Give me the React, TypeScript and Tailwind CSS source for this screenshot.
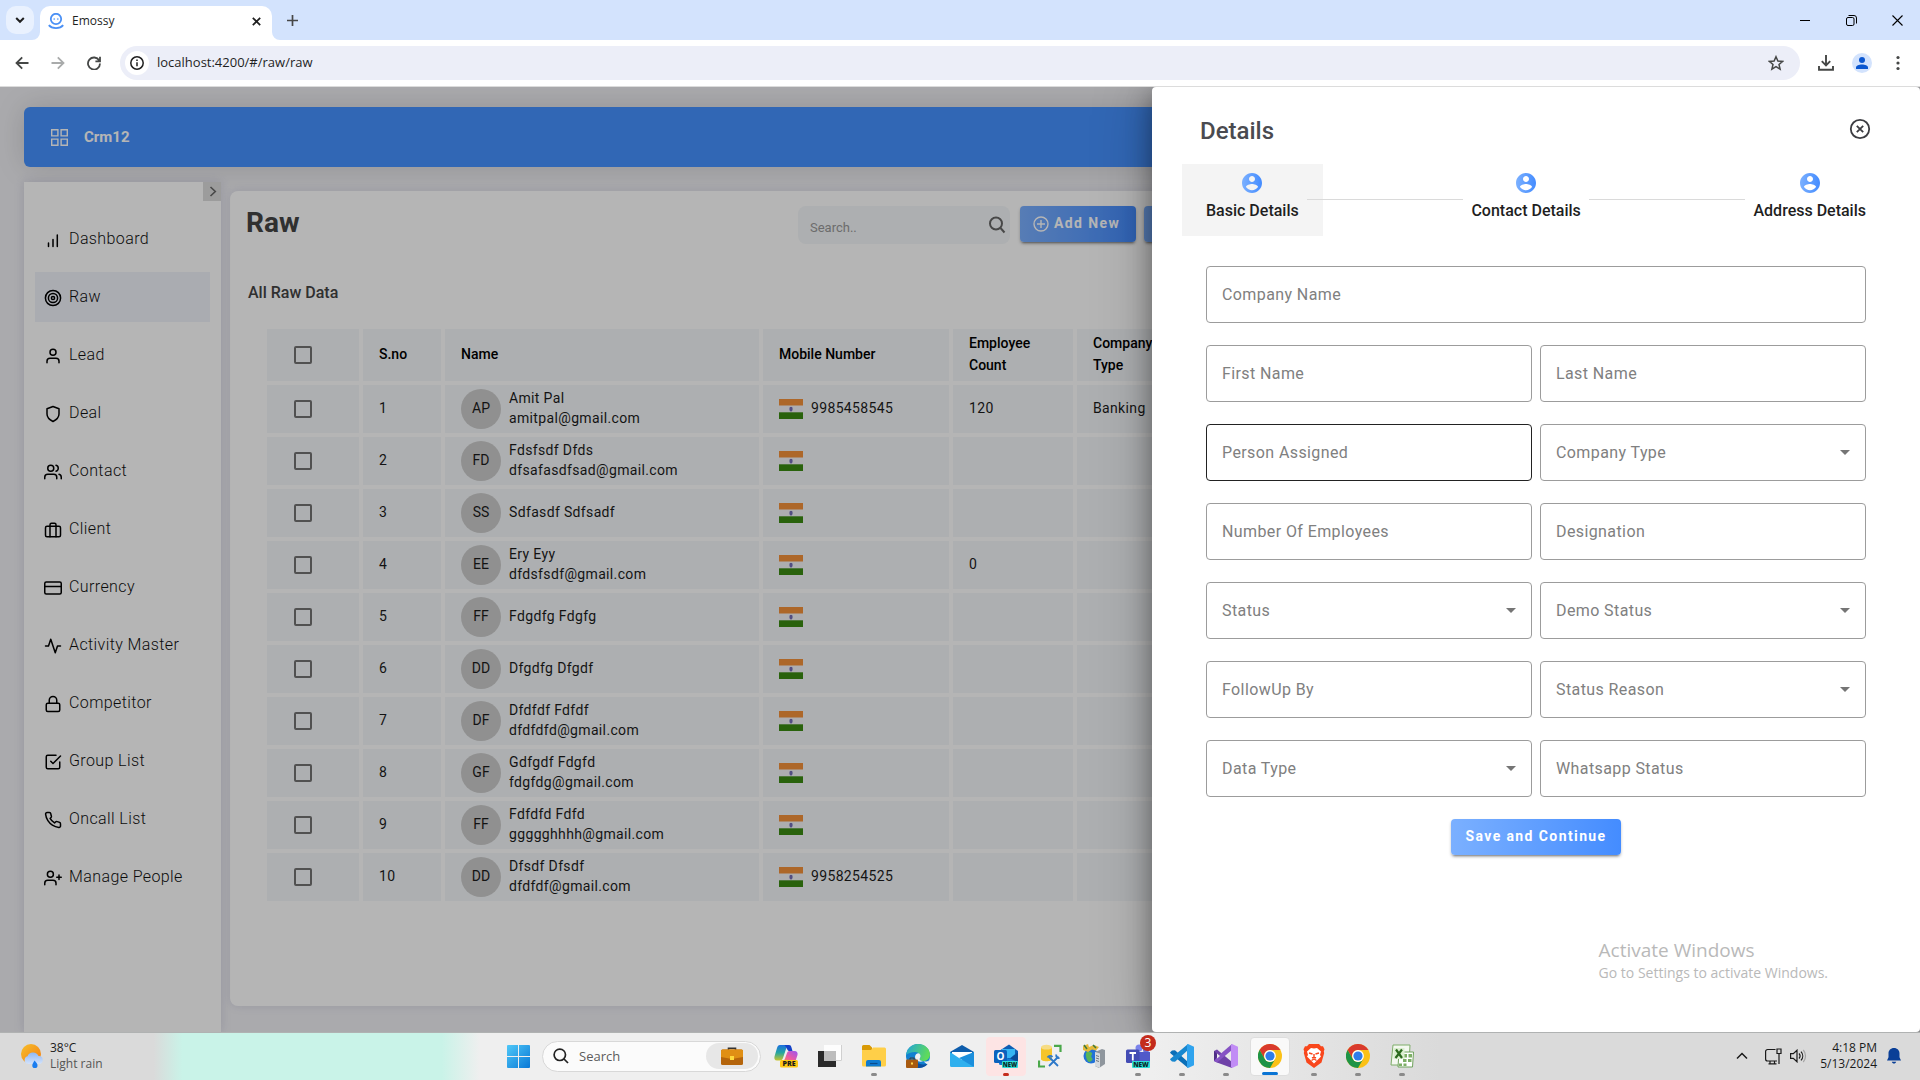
import React from "react";
import {
  FiActivity,
  FiBriefcase,
  FiCheckSquare,
  FiCreditCard,
  FiLock,
  FiPhone,
  FiShield,
  FiUser,
  FiUserPlus,
  FiUsers,
} from "react-icons/fi";

const iconButton = "flex items-center justify-center";

/* ---------- Browser chrome ---------- */

function TabStrip() {
  return (
    <div className="flex h-10 items-end bg-[#d3e3fd]">
      <button aria-label="Search tabs" className={`${iconButton} mb-1.5 ml-1.5 size-7 rounded-[10px] bg-[#e9f1fe]`}>
        <svg width="10" height="10" viewBox="0 0 10 10" fill="none" stroke="#1f1f1f" strokeWidth="2">
          <path d="M1.2 3 5 6.8 8.800 3" />
        </svg>
      </button>
      <div className="relative ml-1.5 flex h-[34px] w-[232px] items-center rounded-t-[10px] bg-white pr-2 pl-2 pb-1">
        <svg className="absolute bottom-0 -left-2" width="8" height="8" viewBox="0 0 8 8" fill="#fff">
          <path d="M8 0v8H0a8 8 0 0 0 8-8z" />
        </svg>
        <svg className="absolute -right-2 bottom-0" width="8" height="8" viewBox="0 0 8 8" fill="#fff">
          <path d="M0 0v8h8a8 8 0 0 1-8-8z" />
        </svg>
        <svg width="16" height="16" viewBox="0 0 16 16" fill="none" stroke="#4a90f5">
          <circle cx="8" cy="6" r="5.200" strokeWidth="1.800" />
          <circle cx="6.200" cy="6" r=".6" fill="#4a90f5" strokeWidth=".4" />
          <circle cx="9.800" cy="6" r=".6" fill="#4a90f5" strokeWidth=".4" />
          <path d="M.8 12.200C4 16 12 16 15.200 12.200" strokeWidth="1.800" />
        </svg>
        <span className="ml-2 flex-1 text-xs text-[#1f1f1f]">Emossy</span>
        <button aria-label="Close tab" className={`${iconButton} size-4`}>
          <svg width="9" height="9" viewBox="0 0 9 9" stroke="#1f1f1f" strokeWidth="1.700">
            <path d="M.8.8l7.400 7.400M8.200.8.800 8.200" />
          </svg>
        </button>
      </div>
      <button aria-label="New tab" className={`${iconButton} mb-2 ml-2 size-6`}>
        <svg width="11" height="11" viewBox="0 0 11 11" stroke="#474747" strokeWidth="1.700">
          <path d="M5.500 0v11M0 5.500h11" />
        </svg>
      </button>
      <div className="ml-auto flex h-10 items-center">
        <button aria-label="Minimize" className={`${iconButton} h-10 w-[46px]`}>
          <svg width="10" height="10" viewBox="0 0 10 10" stroke="#000">
            <path d="M0 5.500h10" />
          </svg>
        </button>
        <button aria-label="Restore" className={`${iconButton} h-10 w-[46px]`}>
          <svg width="11" height="11" viewBox="0 0 11 11" fill="none" stroke="#000">
            <rect x=".5" y="2.500" width="7.500" height="8" rx="1.500" />
            <path d="M2.500.5h5.500a2.500 2.500 0 0 1 2.500 2.500v5.500" />
          </svg>
        </button>
        <button aria-label="Close window" className={`${iconButton} h-10 w-[46px]`}>
          <svg width="11" height="11" viewBox="0 0 11 11" stroke="#000" strokeWidth="1.100">
            <path d="M.5.5l10 10M10.500.5l-10 10" />
          </svg>
        </button>
      </div>
    </div>
  );
}

function AddressBar() {
  return (
    <div className="flex h-[47px] items-center border-b border-[#dcdcdc] bg-white pr-2.5 pl-2.5">
      <button aria-label="Back" className={`${iconButton} size-6`}>
        <svg width="14" height="14" viewBox="0 0 14 14" fill="none" stroke="#454746" strokeWidth="1.800">
          <path d="M13.500 7H1.800M7.200 1.300 1.500 7l5.700 5.700" />
        </svg>
      </button>
      <button aria-label="Forward" className={`${iconButton} ml-3 size-6`}>
        <svg width="14" height="14" viewBox="0 0 14 14" fill="none" stroke="#a9abab" strokeWidth="1.800">
          <path d="M.5 7h11.700M6.800 1.300 12.500 7l-5.700 5.700" />
        </svg>
      </button>
      <button aria-label="Reload" className={`${iconButton} ml-3 size-6`}>
        <svg width="14" height="14" viewBox="0 0 14 14" fill="none" stroke="#454746" strokeWidth="1.800">
          <path d="M12.200 4.500A6 6 0 1 0 13 7.500M13 .8v4.500H8.400" />
        </svg>
      </button>
      <div className="ml-3.5 flex h-[34px] flex-1 items-center rounded-full bg-[#eceef8] px-[5px]">
        <button aria-label="Site information" className={`${iconButton} size-6 rounded-full bg-white`}>
          <svg width="14" height="14" viewBox="0 0 14 14" fill="none" stroke="#1f1f1f" strokeWidth="1.500">
            <circle cx="7" cy="7" r="6.200" />
            <path d="M7 6.200v4M7 3.500v1.500" />
          </svg>
        </button>
        <input
          aria-label="Address"
          readOnly
          value="localhost:4200/#/raw/raw"
          className="ml-2 flex-1 bg-transparent text-[13px] text-[#1f1f1f] outline-none"
        />
        <button aria-label="Bookmark" className={`${iconButton} mr-[5px] size-7`}>
          <svg width="16" height="16" viewBox="0 0 16 16" fill="none" stroke="#454746" strokeWidth="1.500">
            <path d="m8 1.700 1.900 4.300 4.700.4-3.600 3.100 1.100 4.600L8 11.700l-4.100 2.400L5 9.500 1.400 6.400l4.700-.4z" />
          </svg>
        </button>
      </div>
      <button aria-label="Downloads" className={`${iconButton} ml-3 size-7`}>
        <svg width="16" height="16" viewBox="0 0 16 16" fill="none" stroke="#454746" strokeWidth="1.900">
          <path d="M8 0v10M3.800 6.200 8 10.400l4.200-4.200M1 11v3.800h14V11" />
        </svg>
      </button>
      <button aria-label="Profile" className={`${iconButton} ml-3 size-5 rounded-full bg-[#d3e3fd]`}>
        <svg width="12" height="12" viewBox="0 0 12 12" fill="#0b57d0">
          <circle cx="6" cy="3" r="3" />
          <path d="M0 12v-1.500C0 8.500 3 7.500 6 7.500s6 1 6 3V12z" />
        </svg>
      </button>
      <button aria-label="Menu" className={`${iconButton} ml-3.5 size-6`}>
        <svg width="4" height="16" viewBox="0 0 4 16" fill="#454746">
          <circle cx="2" cy="2.500" r="1.600" />
          <circle cx="2" cy="8" r="1.600" />
          <circle cx="2" cy="13.500" r="1.600" />
        </svg>
      </button>
    </div>
  );
}

/* ---------- Sidebar ---------- */

const BarsIcon = () => (
  <svg width="18" height="18" viewBox="0 0 18 18" stroke="#000" strokeWidth="1.500" strokeLinecap="round">
    <path d="M4.500 12v3.500M9 8.500v7M13.300 4v11.500" />
  </svg>
);

const TargetIcon = () => (
  <svg width="18" height="18" viewBox="0 0 18 18" fill="none" stroke="#000" strokeWidth="1.500">
    <circle cx="9" cy="9" r="7.600" />
    <circle cx="9" cy="9" r="4.600" />
    <circle cx="9" cy="9" r="1.600" />
  </svg>
);

const menu = [
  { label: "Dashboard", Icon: BarsIcon },
  { label: "Raw", Icon: TargetIcon, active: true },
  { label: "Lead", Icon: FiUser },
  { label: "Deal", Icon: FiShield },
  { label: "Contact", Icon: FiUsers },
  { label: "Client", Icon: FiBriefcase },
  { label: "Currency", Icon: FiCreditCard },
  { label: "Activity Master", Icon: FiActivity },
  { label: "Competitor", Icon: FiLock },
  { label: "Group List", Icon: FiCheckSquare },
  { label: "Oncall List", Icon: FiPhone },
  { label: "Manage People", Icon: FiUserPlus },
];

function Sidebar() {
  return (
    <aside className="relative w-[197px] shrink-0 bg-white px-[11px] pt-8 shadow-[0_0_10px_rgba(80,80,140,0.18)]">
      <button aria-label="Expand menu" className={`${iconButton} absolute top-0 right-0 h-[19px] w-[18px] bg-[#dcdcdc] pl-0.5`}>
        <svg width="8" height="11" viewBox="0 0 8 11" fill="none" stroke="#666" strokeWidth="1.600">
          <path d="m1.500 1 4.800 4.500-4.800 4.500" />
        </svg>
      </button>
      <nav className="flex flex-col gap-2">
        {menu.map(({ label, Icon, active }) => (
          <a
            key={label}
            href="#"
            className={`flex h-[50px] items-center gap-[7px] pl-[9px] font-light tracking-wide text-[#111] ${active ? "bg-[#f0f2fa]" : ""}`}
          >
            <span className="pt-0.5 text-lg text-black">
              <Icon />
            </span>
            {label}
          </a>
        ))}
      </nav>
    </aside>
  );
}

/* ---------- Data table ---------- */

const rows = [
  { initials: "AP", name: "Amit Pal", email: "amitpal@gmail.com", mobile: "9985458545", count: "120", type: "Banking" },
  { initials: "FD", name: "Fdsfsdf Dfds", email: "dfsafasdfsad@gmail.com" },
  { initials: "SS", name: "Sdfasdf Sdfsadf" },
  { initials: "EE", name: "Ery Eyy", email: "dfdsfsdf@gmail.com", count: "0" },
  { initials: "FF", name: "Fdgdfg Fdgfg" },
  { initials: "DD", name: "Dfgdfg Dfgdf" },
  { initials: "DF", name: "Dfdfdf Fdfdf", email: "dfdfdfd@gmail.com" },
  { initials: "GF", name: "Gdfgdf Fdgfd", email: "fdgfdg@gmail.com" },
  { initials: "FF", name: "Fdfdfd Fdfd", email: "ggggghhhh@gmail.com" },
  { initials: "DD", name: "Dfsdf Dfsdf", email: "dfdfdf@gmail.com", mobile: "9958254525" },
];

const Flag = () => (
  <svg width="24" height="20" viewBox="0 0 24 20">
    <rect width="24" height="20" fill="#f4f4f8" />
    <rect width="24" height="6.500" fill="#f4913a" />
    <rect y="13.300" width="24" height="6.700" fill="#3a8a12" />
    <ellipse cx="12" cy="10" rx="1.800" ry="2.300" fill="#8f8cc8" />
    <path d="M12 8v4.500" stroke="#5a50a8" />
  </svg>
);

const Tick = ({ label }: { label: string }) => (
  <input
    type="checkbox"
    aria-label={label}
    className="ml-[27px] block size-[18px] appearance-none rounded-[2px] border-2 border-[#727272]"
  />
);

function DataTable() {
  const cell = "bg-[#f4f7f9] px-4";
  const textCell = "bg-[#f4f7f9] px-4 pb-0.5";
  return (
    <table className="w-full table-fixed border-separate border-spacing-1 text-left text-sm tracking-wide text-[#1c1c1c]">
      <colgroup>
        <col className="w-[92px]" />
        <col className="w-[78px]" />
        <col className="w-[314px]" />
        <col className="w-[186px]" />
        <col className="w-[120px]" />
        <col />
      </colgroup>
      <thead>
        <tr className="h-[52px] tracking-normal text-black [&>th]:bg-[#f4f7f9] [&>th]:font-medium">
          <th>
            <Tick label="Select all" />
          </th>
          <th className="px-4 pb-0.5">S.no</th>
          <th className="px-4 pb-0.5">Name</th>
          <th className="px-4 pb-0.5">Mobile Number</th>
          <th className="px-4 pb-0.5 leading-[22px]">Employee Count</th>
          <th className="px-4 pb-0.5 leading-[22px]">
            Company
            <br />
            Type
          </th>
        </tr>
      </thead>
      <tbody>
        {rows.map((r, i) => (
          <tr key={i} className="h-12">
            <td className="bg-[#f4f7f9]">
              <Tick label={`Select ${r.name}`} />
            </td>
            <td className={textCell}>{i + 1}</td>
            <td className={cell}>
              <div className="flex items-center gap-2">
                <span className="flex size-10 items-center justify-center rounded-full bg-[#cbcbcb] pb-0.5 tracking-normal">
                  {r.initials}
                </span>
                <span className="pb-0.5">
                  {r.name}
                  <br />
                  {r.email}
                </span>
              </div>
            </td>
            <td className={cell}>
              <div className="flex items-center gap-2">
                <Flag />
                <span className="pb-0.5">{r.mobile}</span>
              </div>
            </td>
            <td className={textCell}>{r.count}</td>
            <td className={textCell}>{r.type}</td>
          </tr>
        ))}
      </tbody>
    </table>
  );
}

const gradientButton =
  "h-9 rounded bg-linear-to-r from-[#7bb0ff] to-[#448cff] text-sm font-bold tracking-widest text-white shadow-[0_3px_2px_-2px_rgba(0,0,0,0.3),0_2px_3px_rgba(0,0,0,0.25)]";

function RawCard() {
  return (
    <section className="ml-[9px] mb-[26px] mt-[9px] min-w-0 flex-1 overflow-hidden rounded-lg bg-white px-4 pt-[15px] shadow-[0_0_10px_rgba(80,80,140,0.15)]">
      <div className="flex items-start">
        <h1 className="w-[552px] pt-px text-[28px] leading-8 font-bold text-[#444]">Raw</h1>
        <div className="flex h-[38px] w-[212px] items-center rounded-lg bg-[#f4f7f9] pr-1 pl-3">
          <input
            aria-label="Search"
            placeholder="Search.."
            className="min-w-0 flex-1 bg-transparent pt-1.5 text-[13px] outline-none placeholder:text-[#999]"
          />
          <svg width="18" height="18" viewBox="0 0 18 18" fill="none" stroke="#666" strokeWidth="2">
            <circle cx="8" cy="7.500" r="6" />
            <path d="m12.500 12 4 4.500" />
          </svg>
        </div>
        <button className={`${gradientButton} ml-2.5 flex w-[116px] items-center gap-[5px] pl-[13px]`}>
          <svg width="16" height="16" viewBox="0 0 16 16" fill="none" stroke="#fff" strokeWidth="1.400">
            <circle cx="8" cy="8" r="7" />
            <path d="M8 4v8M4 8h8" />
          </svg>
          <span className="pb-0.5">Add New</span>
        </button>
        <button aria-label="More actions" className={`${gradientButton} ml-2 w-[116px]`} />
      </div>
      <h2 className="mt-[37px] mb-5 ml-0.5 font-medium text-[#444]">All Raw Data</h2>
      <div className="ml-[17px]">
        <DataTable />
      </div>
    </section>
  );
}

/* ---------- Details drawer ---------- */

type FieldDef = { label: string; select?: boolean; wide?: boolean; active?: boolean };

const fields: FieldDef[] = [
  { label: "Company Name", wide: true },
  { label: "First Name" },
  { label: "Last Name" },
  { label: "Person Assigned", active: true },
  { label: "Company Type", select: true },
  { label: "Number Of Employees" },
  { label: "Designation" },
  { label: "Status", select: true },
  { label: "Demo Status", select: true },
  { label: "FollowUp By" },
  { label: "Status Reason", select: true },
  { label: "Data Type", select: true },
  { label: "Whatsapp Status" },
];

function Field({ label, select, wide, active }: FieldDef) {
  const id = label.toLowerCase().replace(/ /g, "-");
  const box = `h-[57px] w-full appearance-none rounded border bg-transparent px-4 [grid-area:1/1] ${active ? "border-[#222]" : "border-[#9c9c9c]"}`;
  return (
    <div className={`grid items-center ${wide ? "col-span-2" : ""}`}>
      {select ? (
        <select id={id} className={box} defaultValue="">
          <option value="" />
        </select>
      ) : (
        <input id={id} className={box} />
      )}
      <label htmlFor={id} className="pointer-events-none justify-self-start pl-4 tracking-wide text-[#808080] [grid-area:1/1]">
        {label}
      </label>
      {select && (
        <svg
          className="pointer-events-none mr-4 justify-self-end [grid-area:1/1]"
          width="10"
          height="5"
          viewBox="0 0 10 5"
          fill="#757575"
        >
          <path d="M0 0h10L5 5z" />
        </svg>
      )}
    </div>
  );
}

function Step({ label, active }: { label: string; active?: boolean }) {
  return (
    <button
      className={`flex h-[72px] flex-col items-center px-6 pt-[7px] ${active ? "bg-[#f4f4f4]" : ""}`}
    >
      <svg width="24" height="24" viewBox="0 0 24 24">
        <defs>
          <linearGradient id="step-gradient">
            <stop offset="0" stopColor="#7bb0ff" />
            <stop offset="1" stopColor="#448cff" />
          </linearGradient>
        </defs>
        <path
          fill="url(#step-gradient)"
          d="M12 2C6.480 2 2 6.480 2 12s4.480 10 10 10 10-4.480 10-10S17.520 2 12 2zm0 3c1.660 0 3 1.340 3 3s-1.340 3-3 3-3-1.340-3-3 1.340-3 3-3zm0 14.200c-2.500 0-4.710-1.280-6-3.220.03-1.990 4-3.080 6-3.080 1.990 0 5.970 1.090 6 3.080-1.290 1.940-3.500 3.220-6 3.220z"
        />
      </svg>
      <span className="mt-1 font-medium whitespace-nowrap text-[#1f1f1f]">{label}</span>
    </button>
  );
}

function Drawer() {
  return (
    <section
      aria-label="Details"
      className="absolute inset-y-0 right-0 flex w-2/5 flex-col rounded bg-white px-[30px] shadow-[0_8px_24px_rgba(0,0,0,0.35),0_0_60px_rgba(0,0,0,0.25)]"
    >
      <header className="flex items-center justify-between px-[18px] pt-7">
        <h2 className="text-2xl font-medium text-[#4a4b50]">Details</h2>
        <button aria-label="Close" className={`${iconButton} mb-1 size-6`}>
          <svg width="22" height="22" viewBox="0 0 22 22" fill="none" stroke="#3c3d42" strokeWidth="1.800">
            <circle cx="11" cy="11" r="9.200" />
            <path d="m7.800 7.800 6.400 6.400M14.200 7.800l-6.400 6.400" />
          </svg>
        </button>
      </header>
      <div className="mt-[17px] flex items-center">
        <Step label="Basic Details" active />
        <span className="-mx-4 mb-0.5 h-px flex-1 bg-[#dadada]" />
        <Step label="Contact Details" />
        <span className="-mx-4 mb-0.5 h-px flex-1 bg-[#dadada]" />
        <Step label="Address Details" />
      </div>
      <form className="mt-[30px] grid grid-cols-2 gap-x-2 gap-y-[22px] px-6">
        {fields.map((f) => (
          <Field key={f.label} {...f} />
        ))}
        <button type="button" className={`${gradientButton} col-span-2 w-[170px] justify-self-center pb-0.5`}>
          Save and Continue
        </button>
      </form>
      <div className="mt-auto mr-[62px] mb-12 self-end font-['Open_Sans',sans-serif] text-[#b9b9b9]">
        <p className="text-[19px] leading-6">Activate Windows</p>
        <p className="text-sm leading-[22px]">Go to Settings to activate Windows.</p>
      </div>
    </section>
  );
}

/* ---------- Taskbar ---------- */

const S = ({ children }: { children: React.ReactNode }) => (
  <svg width="24" height="24" viewBox="0 0 24 24">
    {children}
  </svg>
);

const CopilotIcon = () => (
  <S>
    <defs>
      <linearGradient id="cp-a" x1="0" y1="0" x2="0" y2="1">
        <stop offset="0" stopColor="#1b6fe0" />
        <stop offset=".5" stopColor="#25a6a0" />
        <stop offset="1" stopColor="#c9c52c" />
      </linearGradient>
      <linearGradient id="cp-b" x1="1" y1="0" x2="0" y2="1">
        <stop offset="0" stopColor="#9a55f2" />
        <stop offset=".6" stopColor="#ee5aa0" />
        <stop offset="1" stopColor="#fb8a4f" />
      </linearGradient>
    </defs>
    <path fill="url(#cp-a)" d="M6 1h9.500c-1.500 0-2.500 1-3 2.500L9 14c-.5 1.500-1.500 2.500-3 2.500H3c-2.500 0-3-2-2.500-4L3 4c.5-2 1.500-3 3-3z" />
    <path fill="#1442c8" d="M10 1h5c1.500 0 2 .8 2.500 2.500L18.500 7H15c-2 0-3-6-5-6z" />
    <path fill="url(#cp-b)" d="M16 7h4.500c2.500 0 3.500 2 3 4l-2 6H8c1.500 0 2.500-1 3-2.500l2-5.500c.5-1.500 1.500-2 3-2z" />
    <rect x="6" y="16" width="18" height="7.500" rx="1.500" fill="#ffc814" />
    <text x="15" y="22.200" fontSize="7" fontWeight="900" textAnchor="middle" fill="#1a1a1a" fontFamily="Open Sans">
      PRE
    </text>
  </S>
);

const TaskViewIcon = () => (
  <S>
    <rect x="0" y="7" width="18" height="16" fill="#2a2a2a" />
    <rect x="6" y="1" width="18" height="16" fill="#fff" opacity=".85" />
    <path d="M23.500 1v15.500H6" stroke="#d0d0d0" fill="none" />
    <rect x="6" y="7" width="12" height="10" fill="#bdbdbd" />
  </S>
);

const FolderIcon = () => (
  <S>
    <path d="M0 2.500A1.500 1.500 0 0 1 1.500 1h6L10 3.500V8H0z" fill="#d99a06" />
    <path d="M0 6h9l2-2.500h11.500A1.500 1.500 0 0 1 24 5v16a1.500 1.500 0 0 1-1.500 1.500h-21A1.500 1.500 0 0 1 0 21z" fill="#ffcf48" />
    <path d="M4 22.500V18a2 2 0 0 1 2-2h11a2 2 0 0 1 2 2v4.500z" fill="#0f7bd0" />
    <path d="M8 19.500h7.500" stroke="#0a4c8c" strokeWidth="1.200" />
  </S>
);

const EdgeIcon = () => (
  <S>
    <defs>
      <linearGradient id="edge-a" x1="0" y1="0" x2="1" y2=".3">
        <stop offset="0" stopColor="#1fa3dc" />
        <stop offset="1" stopColor="#5fdb5a" />
      </linearGradient>
    </defs>
    <circle cx="12" cy="12" r="12" fill="#1180d0" />
    <path d="M0 11C1 4.500 6 0 12 0c7 0 12 5 12 10.500 0 4-3 6.500-6.500 6.500-3 0-4.500-1.200-3.500-2.800C15.500 11.500 13 8 9 8c-4 0-7.500 1.500-9 3z" fill="url(#edge-a)" />
    <path d="M9 13c0 6 5.500 9 13 6.500C19.500 23 16 24 12 24c-3.500-2-5-7-3-11z" fill="#0c4fa0" />
    <path d="M13.900 14.300c1-1.600 1-3.500-.9-5-3 0-4 2-4 4 .5 3.500 4 5.500 8.500 3.700-3 0-4.500-1.200-3.600-2.700z" fill="#f0f0f0" />
    <path d="M23.300 16c-1.500 1.500-4 2-6 1.300l4 3.200c1-1.300 1.700-2.800 2-4.500z" fill="#f0f0f0" />
    <rect x="0" y="15.500" width="12" height="8.500" rx="1" fill="#a85a10" />
    <path d="M4 15.500V14h4v1.500" stroke="#3a3a3a" fill="none" />
    <rect x="5" y="18.500" width="2" height="2" fill="#ffd54a" />
  </S>
);

const MailIcon = () => (
  <S>
    <path d="M0 8 12 1l12 7v4H0z" fill="#0d5cab" />
    <path d="M2 8h20v7l-10 4-10-4z" fill="#fff" />
    <path d="M0 8l12 8L24 8v13.500a1.500 1.500 0 0 1-1.500 1.500h-21A1.500 1.500 0 0 1 0 21.500z" fill="#2fb0ee" />
    <path d="M24 8v15L9 14z" fill="#1b8fdc" />
  </S>
);

const OutlookIcon = () => (
  <S>
    <path d="M5 7 15 .5 24 7v11H5z" fill="#0f5fb4" />
    <path d="M8 5h13v9H8z" fill="#35b4f2" />
    <path d="M5 9l10 6 9-7v11.500a1.500 1.500 0 0 1-1.500 1.500H6.500A1.500 1.500 0 0 1 5 19.500z" fill="#1279d3" />
    <path d="M24 8v10l-8-3.500z" fill="#0a4a96" />
    <rect x="0" y="6" width="13" height="13" rx="1.500" fill="#0b62bd" />
    <text x="6.500" y="16" fontSize="10" fontWeight="700" textAnchor="middle" fill="#fff" fontFamily="Open Sans">
      O
    </text>
    <rect x="8" y="17" width="16" height="7" rx="1" fill="#2fe0d8" />
    <text x="16" y="22.800" fontSize="6" fontWeight="800" textAnchor="middle" fill="#0a2a2a" fontFamily="Open Sans">
      NEW
    </text>
  </S>
);

const DatabaseToolsIcon = () => (
  <S>
    <path d="M16 1.800h6.500V8M1 16.500v6h6" stroke="#4aa84a" strokeWidth="2.200" fill="none" />
    <path d="M3 3v12c0 3 11 3 11 0V3z" fill="#f5c52b" />
    <ellipse cx="8.500" cy="3.200" rx="5.500" ry="2.400" fill="#f6dc84" />
    <path d="M11 13l9 9M20.500 12.500l-9.500 9.500" stroke="#2d78c8" strokeWidth="1.800" />
    <path d="M9.500 13.500c1.500-2 3.500-2 5-.5M18.500 10.500c-1 2 .5 3.800 3 3.500" stroke="#2d78c8" strokeWidth="1.800" fill="none" />
  </S>
);

const ServerIcon = () => (
  <S>
    <circle cx="9" cy="12" r="7.500" fill="#2272d8" />
    <path d="M4 9c2-3 5-1 6 0s-2 3 0 5-2 4-3 4-4-5-3-9z" fill="#57b45a" />
    <path d="M1 2l5-2 1 3 5-2 5 2-3 3.500-4-1-4 2.500-5-2z" fill="#e5b93a" />
    <path d="M2 1l3 4M11 1l3 3" stroke="#3d7a3d" strokeWidth="1.500" />
    <path d="M13 8l7-3 3 1v14l-6 4-4-2z" fill="#8f969d" />
    <path d="M13 8l5 1.500V24l-5-2z" fill="#d6dadd" />
    <path d="M14 11.500l3 1M14 14l3 1M14 16.500l3 1" stroke="#6c757d" />
  </S>
);

const TeamsIcon = () => (
  <S>
    <circle cx="20" cy="6" r="3" fill="#6a70d8" />
    <circle cx="13" cy="4" r="3.500" fill="#7b83eb" />
    <path d="M8 8h16v8c0 4-2 6-5 6h-6c-3 0-5-2-5-5z" fill="#5059c9" />
    <rect x="0" y="5.500" width="13.500" height="13.500" rx="1.500" fill="#434cb4" />
    <path d="M3.500 9h6.500M6.800 9v7.500" stroke="#fff" strokeWidth="1.800" />
    <rect x="6" y="17" width="18" height="7" rx="1" fill="#2fe0d8" />
    <text x="15" y="22.800" fontSize="6.500" fontWeight="800" textAnchor="middle" fill="#0a2a2a" fontFamily="Open Sans">
      NEW
    </text>
  </S>
);

const VsCodeIcon = () => (
  <S>
    <path d="M0 8.500 2 6.500l3-.2L18 18v6L1 9.800z" fill="#0a6fb8" />
    <path d="M0 15.500l2 2 3 .2L18 6V0L1 14.200z" fill="#1787cf" />
    <path d="M18 0l6 2.800v18.400L18 24l-1-1V1z" fill="#2fa3ee" />
  </S>
);

const VisualStudioIcon = () => (
  <S>
    <path d="M0 7l3-1.500L18 18v6L3 18.500 0 17z" fill="#6f42a8" />
    <path d="M0 17V7l3 3v4z" fill="#4f2d86" />
    <path d="M0 17l3 1.500L18 6V0L4 12z" fill="#8653c4" />
    <path d="M3 9.500v5L6 12z" fill="#ededed" />
    <path d="M18 0l6 2.800v18.400L18 24l-1-1V1z" fill="#c18cf5" />
  </S>
);

const ChromeIcon = () => (
  <S>
    <circle cx="12" cy="12" r="12" fill="#fbc116" />
    <path d="M1.600 6A12 12 0 0 1 22.400 6H12a6 6 0 0 0-5.200 9z" fill="#d93a2d" />
    <path d="M1.600 6A12 12 0 0 0 12 24l5.200-9A6 6 0 0 1 6.800 15z" fill="#1e9447" />
    <circle cx="12" cy="12" r="5.900" fill="#fff" />
    <circle cx="12" cy="12" r="4.600" fill="#2f7de9" />
  </S>
);

const BraveIcon = () => (
  <S>
    <path d="M7 0h10l2 2.300 2-.1 1.500 3-.7 2.300.4 1.500-2.700 9.500L12 24l-7.500-5.500L1.800 9l.4-1.500-.7-2.300L3 2.200l2 .1z" fill="#f9471c" />
    <path d="M12 4.500 15 4l4 3.500-1 3.500 1 1.500-4 4-3 3-3-3-4-4L6 11 5 7.500 9 4z" fill="#fff" />
    <path d="M7 9l3.500 1M17 9l-3.500 1M10 14l2-1 2 1M12 10v3M9.500 16.500 12 15l2.500 1.500" stroke="#f9471c" strokeWidth="1.400" fill="none" />
  </S>
);

const ExcelIcon = () => (
  <S>
    <path d="M3 1h17l-1 20H1z" fill="#f4f8f0" stroke="#7fae6a" />
    <path d="M9 8h14.500l-1 15H8z" fill="#fff" stroke="#6fa35c" />
    <path d="M13.500 10v3.500h3.500V10zM18.500 10v3.500H22V10zM13 15v3h3.500v-3zM18 15v3h3.500v-3zM9 19.500v2.500h3v-2.500zM13.500 19.500v2.500h3v-2.500z" fill="#7dae66" />
    <rect x="3.500" y="4" width="11" height="11" fill="#dcefd0" />
    <path d="M6 5.500l6 8.500M12 5.500 5.500 14" stroke="#2c6b1e" strokeWidth="2.200" />
  </S>
);

const apps = [
  { name: "Copilot", Icon: CopilotIcon, mark: "" },
  { name: "Task view", Icon: TaskViewIcon, mark: "" },
  { name: "File Explorer", Icon: FolderIcon, mark: "w-1.5 bg-[#8a8a8a]" },
  { name: "Edge", Icon: EdgeIcon, mark: "" },
  { name: "Mail", Icon: MailIcon, mark: "" },
  { name: "Outlook", Icon: OutlookIcon, mark: "w-1.5 bg-[#c42b1c]", tile: "bg-[#fde4e4]" },
  { name: "Database tools", Icon: DatabaseToolsIcon, mark: "" },
  { name: "Server manager", Icon: ServerIcon, mark: "" },
  { name: "Teams", Icon: TeamsIcon, mark: "w-1.5 bg-[#8a8a8a]", badge: "3" },
  { name: "Visual Studio Code", Icon: VsCodeIcon, mark: "w-1.5 bg-[#8a8a8a]" },
  { name: "Visual Studio", Icon: VisualStudioIcon, mark: "w-1.5 bg-[#8a8a8a]" },
  { name: "Chrome", Icon: ChromeIcon, mark: "w-4 bg-[#0a74d4]", tile: "bg-[#f9f9f9] border border-[#dedede]" },
  { name: "Brave", Icon: BraveIcon, mark: "w-1.5 bg-[#8a8a8a]" },
  { name: "Chrome profile", Icon: ChromeIcon, mark: "w-1.5 bg-[#8a8a8a]" },
  { name: "Excel", Icon: ExcelIcon, mark: "w-1.5 bg-[#8a8a8a]" },
];

function Taskbar() {
  return (
    <footer className="grid h-12 grid-cols-[1fr_auto_1fr] items-center border-t border-[#b0b2b2] bg-[linear-gradient(90deg,#dadada_0,#dadada_8%,#c9f3e8_9.500%,#c9f3e8_23%,#efefef_25%,#efefef_60%,#dadada_75%)] pb-px font-['Open_Sans',sans-serif] text-xs leading-4 text-[#1a1a1a]">
      <div className="flex items-center gap-1.5 pl-5">
        <svg width="24" height="26" viewBox="0 0 24 26">
          <defs>
            <linearGradient id="sun" x1="0" y1="0" x2="1" y2="1">
              <stop offset="0" stopColor="#f6bf2a" />
              <stop offset="1" stopColor="#f47b12" />
            </linearGradient>
            <linearGradient id="cloud" x1="0" y1="0" x2="0" y2="1">
              <stop offset="0" stopColor="#8fb8f5" />
              <stop offset="1" stopColor="#d3e2fa" />
            </linearGradient>
          </defs>
          <circle cx="11" cy="11" r="10" fill="url(#sun)" />
          <path d="M8 21a4 4 0 0 1-.5-7.800A6 6 0 0 1 18.500 13a4 4 0 0 1 .5 8z" fill="url(#cloud)" />
          <path d="M14.500 17.500c2 2 3 3.500 3 5a2.600 2.600 0 0 1-5.200 0c0-1.500 1-3 2.200-5z" fill="#1a7df0" />
        </svg>
        <p>
          38°C
          <br />
          <span className="text-[#555]">Light rain</span>
        </p>
      </div>
      <div className="flex items-center pl-2.5">
        <button aria-label="Start" className={`${iconButton} size-6`}>
          <svg width="23" height="23" viewBox="0 0 23 23">
            <defs>
              <linearGradient id="win" x1="0" y1="0" x2="1" y2="1">
                <stop offset="0" stopColor="#4fc8f8" />
                <stop offset="1" stopColor="#0a78d6" />
              </linearGradient>
            </defs>
            <path fill="url(#win)" d="M0 1a1 1 0 0 1 1-1h10v11H0zM12 0h10a1 1 0 0 1 1 1v10H12zM0 12h11v11H1a1 1 0 0 1-1-1zM12 12h11v10a1 1 0 0 1-1 1H12z" />
          </svg>
        </button>
        <div className="mr-[3px] ml-3 flex h-[31px] w-[219px] items-center rounded-full border border-[#d8d8d8] bg-[#fbfbfb] pr-0.5 pl-2.5">
          <svg width="16" height="16" viewBox="0 0 16 16" fill="none" stroke="#222" strokeWidth="1.700">
            <circle cx="6.800" cy="6.800" r="5.700" />
            <path d="m11 11 4 4" />
          </svg>
          <input
            aria-label="Taskbar search"
            placeholder="Search"
            className="ml-2.5 min-w-0 flex-1 bg-transparent text-[13px] outline-none placeholder:text-[#5c5c5c]"
          />
          <span className="flex h-[26px] w-[52px] items-center justify-center rounded-full bg-[#e7e7e7]">
            <svg width="22" height="18" viewBox="0 0 22 18">
              <path d="M7.500 3V1.200h7V3" fill="none" stroke="#333" strokeWidth="1.600" />
              <rect y="2.500" width="22" height="15.500" rx="1.500" fill="#b5650c" />
              <path d="M0 4a1.500 1.500 0 0 1 1.500-1.500h19A1.500 1.500 0 0 1 22 4v6l-11 2L0 10z" fill="#e08f14" />
              <rect x="9" y="9" width="4" height="4" fill="#ffd83a" />
            </svg>
          </span>
        </div>
        {apps.map(({ name, Icon, mark, tile, badge }) => (
          <button key={name} aria-label={name} className="flex w-11 items-center justify-center">
            <span className={`relative flex h-[39px] w-10 items-center justify-center rounded ${tile ?? ""}`}>
              <Icon />
              {badge && (
                <span className="absolute -top-0.5 right-0.5 flex size-4 items-center justify-center rounded-full bg-[#c42b1c] text-white">
                  {badge}
                </span>
              )}
              {mark && <span className={`absolute bottom-0 h-[3px] rounded-full ${mark}`} />}
            </span>
          </button>
        ))}
      </div>
      <div className="flex items-center justify-end pr-[19px]">
        <svg width="12" height="8" viewBox="0 0 12 8" fill="none" stroke="#1a1a1a" strokeWidth="1.500">
          <path d="M1 6.500 6 1.500l5 5" />
        </svg>
        <svg className="ml-[17px]" width="17" height="17" viewBox="0 0 17 17" fill="none" stroke="#1a1a1a" strokeWidth="1.200">
          <path d="M10.500 1.500H2.600a2 2 0 0 0-2 2v7.500a2 2 0 0 0 2 2H12M5 13v2.500M9.500 13v2.500M3.500 15.800h8" />
          <path d="M12 1h4v4.500h-4zM14 5.500V16" />
        </svg>
        <svg className="ml-2" width="17" height="14" viewBox="0 0 17 14" fill="none" stroke="#1a1a1a" strokeWidth="1.200">
          <path d="M.6 4.600h2.700L7 1.200v11.600L3.300 9.400H.6zM9 4.500c1.300 1.500 1.300 3.500 0 5M11 2.700c2.300 2.500 2.300 6.100 0 8.600" />
          <path d="M13.300 1c3 3.500 3 8.500 0 12" stroke="#a5a5a5" />
        </svg>
        <p className="ml-[13px] text-right">
          4:18 PM
          <br />
          5/13/2024
        </p>
        <svg className="ml-2.5" width="14" height="16" viewBox="0 0 14 16" fill="#0a3f97">
          <path d="M7 0c3.300 0 5.500 2.400 5.500 5.500v3.700L14 12.500H0l1.500-3.300V5.500C1.500 2.400 3.700 0 7 0zM4.800 13.700h4.400c-.3 1.200-1.100 1.800-2.200 1.800s-1.900-.6-2.200-1.800z" />
        </svg>
      </div>
    </footer>
  );
}

export default function App() {
  return (
    <div className="flex min-h-screen flex-col font-[Roboto,sans-serif]">
      <div className="font-['Open_Sans',sans-serif]">
        <TabStrip />
        <AddressBar />
      </div>
      <main className="relative flex flex-1 flex-col overflow-hidden bg-[#f0f0f4] px-6 pt-5">
        <header className="flex h-[60px] items-center rounded-md bg-[#4592ff] px-[27px] text-white shadow-[0_0_30px_rgba(0,0,0,0.14)]">
          <svg width="17" height="17" viewBox="0 0 17 17" fill="none" stroke="#fff" strokeWidth="1.400">
            <path d="M.7.7h6.200v6.200H.7zM10.100.7h6.200v6.200h-6.200zM.7 10.100h6.200v6.200H.7zM10.100 10.100h6.200v6.200h-6.200z" />
          </svg>
          <span className="ml-4 text-[15px] font-bold">Crm12</span>
        </header>
        <div className="mt-[15px] flex flex-1">
          <Sidebar />
          <RawCard />
        </div>
        <div className="absolute inset-0 bg-black/29" />
        <Drawer />
      </main>
      <Taskbar />
    </div>
  );
}
